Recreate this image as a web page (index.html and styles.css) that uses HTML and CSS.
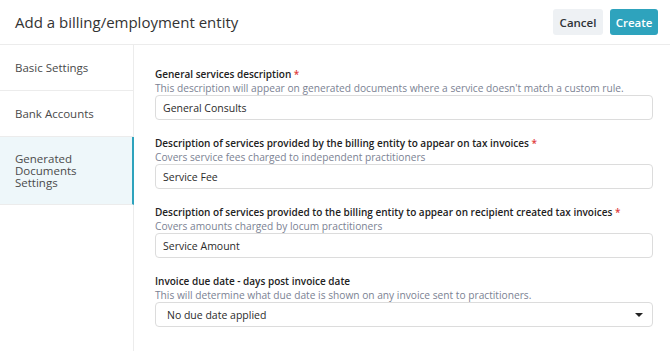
FILE: index.html
```html
<!DOCTYPE html>
<html>
<head>
    <meta charset="utf-8" />
    <meta name="viewport" content="width=device-width, initial-scale=1.0">
    <title>Add a billing/employment entity</title>
    <link rel="stylesheet" href="styles.css">
</head>
<body>
    <div class="page-header">
        <h1 class="page-title">Add a billing/employment entity</h1>
        <div class="header-actions">
            <button class="btn btn-cancel">Cancel</button>
            <button class="btn btn-create">Create</button>
        </div>
    </div>
    <div class="page-body">
        <div class="side-nav">
            <div class="nav-item">Basic Settings</div>
            <div class="nav-item">Bank Accounts</div>
            <div class="nav-item active">Generated Documents Settings</div>
        </div>
        <div class="form-area">
            <div class="field">
                <div class="field-label">General services description <span class="req">*</span></div>
                <div class="field-hint">This description will appear on generated documents where a service doesn't match a custom rule.</div>
                <input class="field-input" type="text" value="General Consults">
            </div>
            <div class="field">
                <div class="field-label">Description of services provided by the billing entity to appear on tax invoices <span class="req">*</span></div>
                <div class="field-hint">Covers service fees charged to independent practitioners</div>
                <input class="field-input" type="text" value="Service Fee">
            </div>
            <div class="field">
                <div class="field-label">Description of services provided to the billing entity to appear on recipient created tax invoices <span class="req">*</span></div>
                <div class="field-hint">Covers amounts charged by locum practitioners</div>
                <input class="field-input" type="text" value="Service Amount">
            </div>
            <div class="field">
                <div class="field-label">Invoice due date - days post invoice date</div>
                <div class="field-hint">This will determine what due date is shown on any invoice sent to practitioners.</div>
                <div class="field-select">
                    <span>No due date applied</span>
                    <span class="caret"></span>
                </div>
            </div>
        </div>
    </div>
</body>
</html>
```

FILE: styles.css
```css
body {
    margin: 0;
    padding: 0;
    background: #fff;
    font-family: 'Open Sans', 'Noto Sans', sans-serif;
    color: #2b2b2b;
}
.page-header {
    height: 44px;
    display: flex;
    align-items: center;
    justify-content: space-between;
    padding: 0 12px 0 15px;
    border-bottom: 1px solid #ececec;
}
.page-title {
    margin: 0;
    font-size: 15px;
    font-weight: 400;
    color: #333;
}
.header-actions {
    display: flex;
    gap: 7px;
}
.btn {
    height: 26px;
    border: none;
    border-radius: 3px;
    font-family: inherit;
    font-size: 11.5px;
    font-weight: 600;
    padding: 0 4px;
    cursor: pointer;
}
.btn-cancel {
    width: 50px;
    background-color: #eef1f4;
    color: #2f3338;
}
.btn-create {
    width: 48px;
    background-color: #2ea3bd;
    color: #fff;
}
.page-body {
    display: flex;
    height: 306px;
}
.side-nav {
    width: 133px;
    flex-shrink: 0;
    border-right: 1px solid #ececec;
}
.nav-item {
    height: 46px;
    box-sizing: border-box;
    display: flex;
    align-items: center;
    padding: 0 15px;
    border-bottom: 1px solid #ececec;
    font-size: 11.5px;
    color: #4a4a4a;
}
.nav-item:first-child {
    height: 46px;
}
.nav-item.active {
    height: 68px;
    background-color: #eef7fa;
    border-right: 2px solid #2ea3bd;
    margin-right: -1px;
    line-height: 12px;
}
.form-area {
    flex: 1;
    padding: 22px 17px 0 21px;
}
.field {
    margin-bottom: 16px;
}
.field-label {
    font-size: 10px;
    font-weight: 600;
    color: #222;
    line-height: 14px;
}
.req {
    color: #e03c3c;
}
.field-hint {
    font-size: 10.2px;
    color: #7b8293;
    line-height: 14px;
}
.field-input,
.field-select {
    display: block;
    width: 100%;
    box-sizing: border-box;
    height: 25px;
    margin: 0;
    border: 1px solid #dcdcdc;
    border-radius: 4px;
    padding: 0 7px;
    font-family: inherit;
    font-size: 10.5px;
    color: #2b2b2b;
    outline: none;
}
.field-select {
    display: flex;
    align-items: center;
    justify-content: space-between;
    padding: 0 9px 0 11px;
}
.caret {
    width: 0;
    height: 0;
    border-left: 4px solid transparent;
    border-right: 4px solid transparent;
    border-top: 4px solid #222;
}
```
